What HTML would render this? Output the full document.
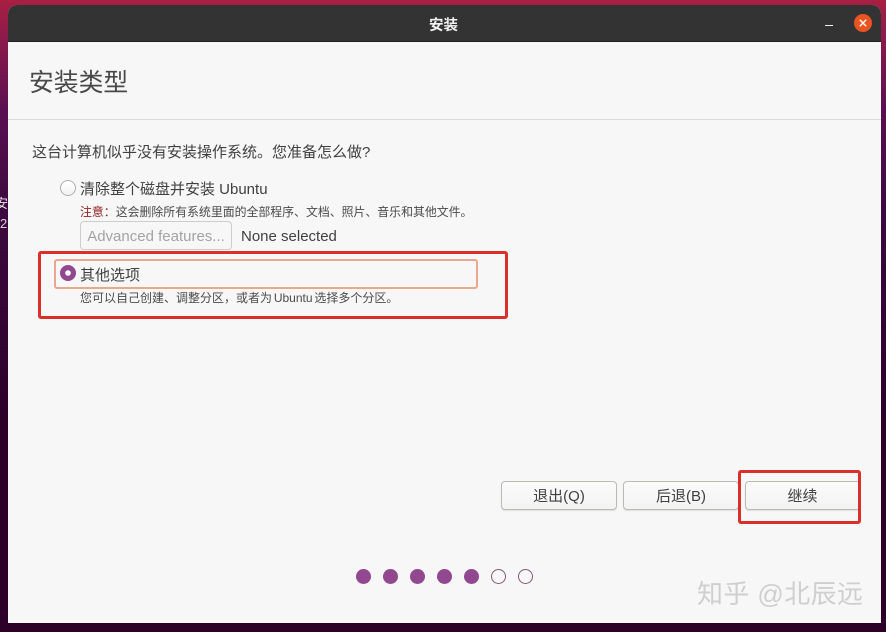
<!DOCTYPE html>
<html><head><meta charset="utf-8"><style>
html,body{margin:0;padding:0}
body{width:886px;height:632px;position:relative;overflow:hidden;background:#2c0029;font-family:"Liberation Sans","Noto Sans CJK SC",sans-serif;color:#404040}
.bg{position:absolute;left:0;top:0;width:886px;height:632px;background:linear-gradient(180deg,#a81f42 0,#8c1a4c 40px,#5a1050 110px,#3c0a40 210px,#2c0029 420px)}
.a{position:absolute;white-space:nowrap;line-height:1}
.win{position:absolute;left:8px;top:5px;width:873px;height:618px;background:#f7f7f7;border-radius:9px 9px 0 0;overflow:hidden}
.tb{position:absolute;left:0;top:0;width:873px;height:36px;background:#333;border-bottom:1px solid #1f1f1f}
.btn{position:absolute;top:481px;height:29px;box-sizing:border-box;border:1px solid #bdbab6;border-radius:4px;background:linear-gradient(#fbfbfb,#f4f3f3);box-shadow:0 1px 1px rgba(0,0,0,.1);font-size:15px;line-height:29px;text-align:center;color:#404040}
.dot{position:absolute;top:569px;width:15px;height:15px;border-radius:50%;background:#91488f}
.dot.o{box-sizing:border-box;background:#f9f7f8;border:1.5px solid #7d5a78}
.red{position:absolute;box-sizing:border-box;border:3px solid #d9302a;border-radius:3px}
</style></head><body>
<div class="bg"></div>
<div class="a" style="left:-5px;top:197px;font-size:13px;color:#e8e0e6">安</div>
<div class="a" style="left:0;top:217px;font-size:13px;color:#d8d0d8;width:8px;overflow:hidden">2</div>
<div class="win">
<div class="tb"></div>
</div>
<div class="a" style="left:429px;top:19px;font-size:14.5px;font-weight:bold;color:#f2f2f2">安装</div>
<div class="a" style="left:825px;top:25px;width:8px;height:1px;background:#f0f0f0"></div>
<svg style="position:absolute;left:854px;top:14px" width="18" height="18" viewBox="0 0 18 18"><circle cx="9" cy="9" r="9" fill="#e95420"/><path d="M5.8 5.8L12.2 12.2M12.2 5.8L5.8 12.2" stroke="#fff" stroke-width="1.4"/></svg>

<div class="a" style="left:29px;top:72px;font-size:24.8px;color:#484848">安装类型</div>
<div class="a" style="left:8px;top:119px;width:873px;height:1px;background:#dcdcdc"></div>

<div class="a" style="left:32px;top:145px;font-size:15px">这台计算机似乎没有安装操作系统。您准备怎么做?</div>

<div class="a" style="left:60px;top:180px;width:16px;height:16px;box-sizing:border-box;border-radius:50%;border:1px solid #b0aeaa;background:linear-gradient(#fff,#f2f2f2)"></div>
<div class="a" style="left:80px;top:182px;font-size:15px">清除整个磁盘并安装 Ubuntu</div>
<div class="a" style="left:80px;top:207px;font-size:11.9px;color:#4a4a4a"><span style="color:#8f1d1d">注意&#xFF1A;</span>这会删除所有系统里面的全部程序、文档、照片、音乐和其他文件。</div>
<div class="a" style="left:80px;top:221px;width:152px;height:29px;box-sizing:border-box;border:1px solid #cfcdca;border-radius:4px;background:#f7f7f7;font-size:15px;line-height:29px;text-align:center;color:#a3a3a3">Advanced features...</div>
<div class="a" style="left:241px;top:229px;font-size:15px">None selected</div>

<div class="a" style="left:54px;top:259px;width:424px;height:30px;box-sizing:border-box;border:2px solid #eba68f;border-radius:3px"></div>
<svg style="position:absolute;left:60px;top:265px" width="16" height="16" viewBox="0 0 16 16"><circle cx="8" cy="8" r="8" fill="#91488f"/><circle cx="8" cy="8" r="2.8" fill="#fff"/></svg>
<div class="a" style="left:80px;top:268px;font-size:15px">其他选项</div>
<div class="a" style="left:80px;top:292px;font-size:12px;color:#4a4a4a;word-spacing:-1.5px">您可以自己创建、调整分区&#xFF0C;或者为 Ubuntu 选择多个分区。</div>
<div class="red" style="left:38px;top:251px;width:470px;height:68px"></div>

<div class="btn" style="left:501px;width:116px">退出(Q)</div>
<div class="btn" style="left:623px;width:116px">后退(B)</div>
<div class="btn" style="left:745px;width:114px;border-right:none;border-radius:4px 0 0 4px">继续</div>
<div class="red" style="left:738px;top:470px;width:123px;height:54px"></div>

<div class="dot" style="left:356px"></div>
<div class="dot" style="left:383px"></div>
<div class="dot" style="left:410px"></div>
<div class="dot" style="left:437px"></div>
<div class="dot" style="left:464px"></div>
<div class="dot o" style="left:491px"></div>
<div class="dot o" style="left:518px"></div>

<div class="a" style="left:697px;top:581px;font-size:26px;letter-spacing:.4px;color:#cfcfcf;font-family:'Liberation Sans','WenQuanYi Zen Hei','Noto Sans CJK SC',sans-serif">知乎 @北辰远</div>
</body></html>
